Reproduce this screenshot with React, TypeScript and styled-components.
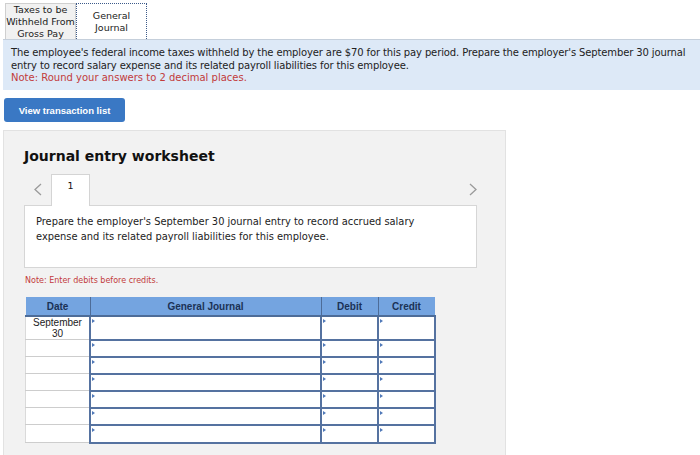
import React from 'react';
import styled, { createGlobalStyle } from 'styled-components';

const GlobalStyle = createGlobalStyle`
  body {
    margin: 0;
    background: #fff;
    font-family: 'DejaVu Sans', Verdana, sans-serif;
    color: #222;
  }
`;

const Page = styled.div`
  width: 700px;
  height: 455px;
  overflow: hidden;
`;

const TabBar = styled.div`
  display: flex;
  padding: 3px 0 0 5px;
`;

const Tab = styled.div<{ active?: boolean }>`
  width: 71px;
  height: 36px;
  box-sizing: border-box;
  display: flex;
  align-items: center;
  justify-content: center;
  text-align: center;
  font-size: 9.5px;
  line-height: 12px;
  color: #222;
  background: ${p => (p.active ? '#fff' : '#f1f1f1')};
  border: ${p => (p.active ? '1px dotted #3c5a8a' : '1px solid #cfcfcf')};
  border-bottom: none;
`;

const InfoPanel = styled.div`
  margin-left: 3px;
  height: 51px;
  box-sizing: border-box;
  background: #dde9f7;
  border-top: 1px solid #c5cfdb;
  padding: 7px 0 0 8px;
  font-size: 10px;
  line-height: 12.5px;
  color: #222;
`;

const InfoText = styled.span`
  letter-spacing: -0.12px;
`;

const RedNote = styled.div<{ size?: number }>`
  color: #c23b3b;
  font-size: ${p => p.size || 10}px;
`;

const ListButton = styled.button`
  display: block;
  margin: 8px 0 0 4px;
  width: 121px;
  height: 24px;
  border: none;
  border-radius: 3px;
  background: #3a78c4;
  color: #fff;
  font-family: 'Liberation Sans', Arial, sans-serif;
  font-weight: bold;
  font-size: 9.5px;
  padding: 0;
`;

const Worksheet = styled.div`
  margin: 8px 0 0 3px;
  width: 503px;
  height: 330px;
  box-sizing: border-box;
  background: #f2f2f2;
  border: 1px solid #e2e2e2;
  padding: 0 0 0 20px;
`;

const Title = styled.h2`
  margin: 0;
  padding-top: 16px;
  font-size: 14px;
  line-height: 18px;
  font-weight: bold;
  color: #111;
`;

const NavRow = styled.div`
  display: flex;
  align-items: flex-end;
  margin-top: 8px;
  height: 32px;
  width: 453px;
`;

const Chevron = styled.div<{ right?: boolean }>`
  width: 27px;
  height: 32px;
  display: flex;
  align-items: center;
  justify-content: ${p => (p.right ? 'flex-end' : 'center')};
  margin-left: ${p => (p.right ? 'auto' : '0')};
  color: #999;
`;

const StepTab = styled.div`
  width: 39px;
  height: 32px;
  box-sizing: border-box;
  background: #fff;
  border: 1px solid #d4d4d4;
  border-bottom: none;
  display: flex;
  justify-content: center;
  padding-top: 5px;
  font-size: 9.5px;
  color: #111;
  position: relative;
  bottom: -1px;
`;

const ContentBox = styled.div`
  width: 453px;
  height: 63px;
  box-sizing: border-box;
  background: #fff;
  border: 1px solid #d6d6d6;
  padding: 9px 0 0 11px;
  font-size: 9.9px;
  line-height: 14.5px;
  color: #222;
`;

const NoteLine = styled(RedNote)`
  margin: 8px 0 0 1px;
`;

const Table = styled.table`
  margin: 12px 0 0 1px;
  border-collapse: collapse;
  table-layout: fixed;
  font-family: 'Liberation Sans', Arial, sans-serif;
`;

const Th = styled.th<{ w: number }>`
  width: ${p => p.w}px;
  height: 18px;
  padding: 0;
  background: #74a4e0;
  color: #1b3256;
  font-size: 10px;
  font-weight: bold;
  border-left: 1px solid #4d6c98;
  border-bottom: 2px solid #4d6c98;
  &:first-child {
    border-left: none;
  }
`;

const DateCell = styled.td<{ h: number }>`
  height: ${p => p.h}px;
  padding: 0;
  background: #fff;
  border-bottom: 1px solid #cdcdcd;
  border-left: 1px solid #dadada;
  text-align: center;
  vertical-align: top;
  font-size: 10px;
  line-height: 11px;
  color: #222;
`;

const InputCell = styled.td`
  position: relative;
  padding: 0;
  background: #fff;
  border: 2px solid #5572a0;
  &::before {
    content: '';
    position: absolute;
    top: 2px;
    left: 1px;
    border-top: 2px solid transparent;
    border-bottom: 2px solid transparent;
    border-left: 3px solid #4f78b8;
  }
`;

const rows = [22, 16, 16, 16, 16, 16, 17];

const ChevronIcon = ({ right }: { right?: boolean }) => (
  <svg width="8" height="13" viewBox="0 0 8 13">
    <path d={right ? 'M1 1 L7 6.5 L1 12' : 'M7 1 L1 6.5 L7 12'} fill="none" stroke="#9a9a9a" strokeWidth="1.3" />
  </svg>
);

export default function App() {
  return (
    <Page>
      <GlobalStyle />
      <TabBar>
        <Tab>
          Taxes to be
          <br />
          Withheld From
          <br />
          Gross Pay
        </Tab>
        <Tab active>
          General
          <br />
          Journal
        </Tab>
      </TabBar>
      <InfoPanel>
        <InfoText>
          The employee's federal income taxes withheld by the employer are $70 for this pay period. Prepare the employer's September 30 journal entry to record salary expense and its related payroll liabilities for this employee.
        </InfoText>
        <RedNote>Note: Round your answers to 2 decimal places.</RedNote>
      </InfoPanel>
      <ListButton type="button">View transaction list</ListButton>
      <Worksheet>
        <Title>Journal entry worksheet</Title>
        <NavRow>
          <Chevron>
            <ChevronIcon />
          </Chevron>
          <StepTab>1</StepTab>
          <Chevron right>
            <ChevronIcon right />
          </Chevron>
        </NavRow>
        <ContentBox>
          Prepare the employer's September 30 journal entry to record accrued salary
          <br />
          expense and its related payroll liabilities for this employee.
        </ContentBox>
        <NoteLine size={8}>Note: Enter debits before credits.</NoteLine>
        <Table>
          <thead>
            <tr>
              <Th w={64}>Date</Th>
              <Th w={230}>General Journal</Th>
              <Th w={56}>Debit</Th>
              <Th w={56}>Credit</Th>
            </tr>
          </thead>
          <tbody>
            {rows.map((h, i) => (
              <tr key={i}>
                <DateCell h={h}>
                  {i === 0 && (
                    <>
                      September
                      <br />
                      30
                    </>
                  )}
                </DateCell>
                <InputCell />
                <InputCell />
                <InputCell />
              </tr>
            ))}
          </tbody>
        </Table>
      </Worksheet>
    </Page>
  );
}
